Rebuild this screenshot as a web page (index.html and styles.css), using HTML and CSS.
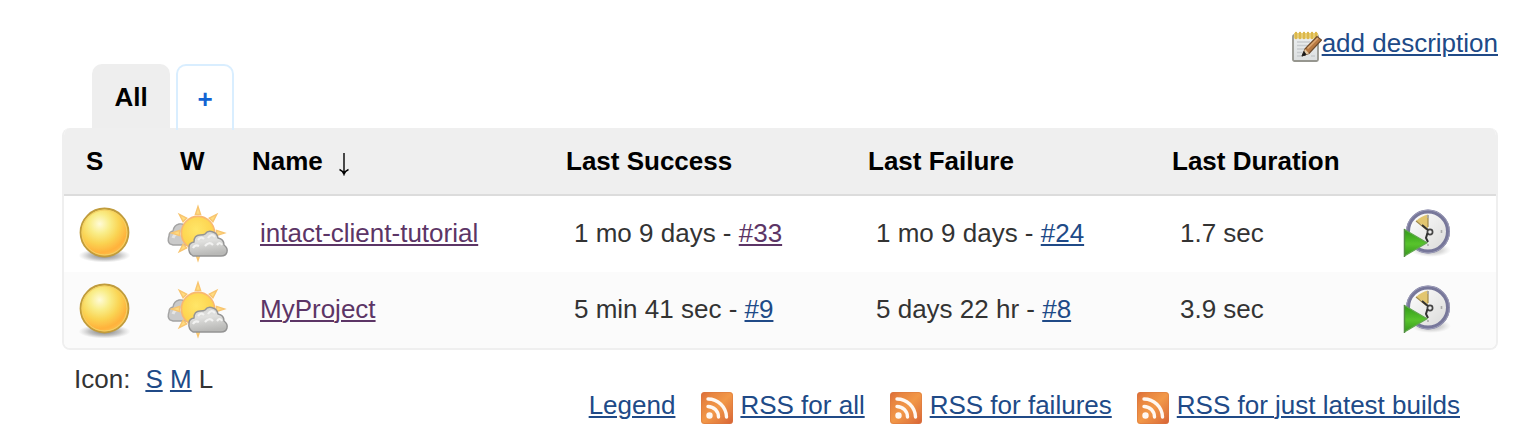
FILE: index.html
```html
<!DOCTYPE html>
<html lang="en">
<head>
<meta charset="utf-8">
<title>Dashboard</title>
<link rel="stylesheet" href="styles.css">
</head>
<body>
<svg class="defs" width="0" height="0" aria-hidden="true">
  <defs>
    <radialGradient id="ball" cx=".4" cy=".32" r=".7"><stop offset="0" stop-color="#fffbd8"/><stop offset=".3" stop-color="#f9ed88"/><stop offset=".58" stop-color="#fad453"/><stop offset=".85" stop-color="#ffb23c"/><stop offset="1" stop-color="#ffbe4c"/></radialGradient>
    <radialGradient id="shade"><stop offset="0" stop-color="#555" stop-opacity=".8"/><stop offset=".6" stop-color="#777" stop-opacity=".42"/><stop offset="1" stop-color="#999" stop-opacity="0"/></radialGradient>
    <radialGradient id="sun" cx=".45" cy=".4" r=".6"><stop offset="0" stop-color="#ffe668"/><stop offset="1" stop-color="#fdd04a"/></radialGradient>
    <linearGradient id="cloud" x1="0" y1="0" x2=".2" y2="1"><stop offset="0" stop-color="#d2d2d0"/><stop offset=".45" stop-color="#e0e0de"/><stop offset="1" stop-color="#b9b9b7"/></linearGradient>
    <linearGradient id="face" x1="0" y1="0" x2="1" y2="1"><stop offset="0" stop-color="#fff"/><stop offset="1" stop-color="#d9d9d8"/></linearGradient>
    <linearGradient id="play" x1="0" y1="0" x2="0" y2="1"><stop offset="0" stop-color="#2f9a16"/><stop offset=".55" stop-color="#58c32d"/><stop offset="1" stop-color="#35991b"/></linearGradient>
    <linearGradient id="feed" x1="0" y1="0" x2="1" y2="1"><stop offset="0" stop-color="#dc6a37"/><stop offset=".2" stop-color="#e78440"/><stop offset=".5" stop-color="#f29848"/><stop offset=".8" stop-color="#e27a3e"/><stop offset="1" stop-color="#d75f35"/></linearGradient>
    <linearGradient id="paper" x1="0" y1="0" x2="0" y2="1"><stop offset="0" stop-color="#eceff0"/><stop offset="1" stop-color="#dcdfe0"/></linearGradient>
    <filter id="soft" filterUnits="userSpaceOnUse" x="-4" y="-4" width="72" height="72"><feGaussianBlur stdDeviation=".75"/></filter>
    <symbol id="i-ball" viewBox="0 0 56 60">
      <ellipse cx="26.5" cy="51.5" rx="26" ry="7" fill="url(#shade)"/>
      <g filter="url(#soft)"><circle cx="26.5" cy="28.5" r="24" fill="url(#ball)" stroke="#c09c3c" stroke-width="1.8"/><circle cx="26.5" cy="28.5" r="22.4" fill="none" stroke="#f3d164" stroke-width="1"/></g>
    </symbol>
    <symbol id="i-weather" viewBox="0 0 64 64">
      <g filter="url(#soft)">
        <path d="M4 42Q1 39 3 34Q3 30 7 29Q8 23 13 22Q19 21 21 27V43H7Z" fill="#cacaca" stroke="#a4a4a4" stroke-width="1.4"/>
        <path d="M7 36Q9 30 15 32" fill="none" stroke="#e5e5e5" stroke-width="3"/>
        <g fill="#ffdc80" stroke="#f8c570" stroke-width="1.4">
          <path id="ray" d="M29.4 12.5 32 4.500 34.6 12.5Z"/>
          <use href="#ray" transform="rotate(45 32 31)"/><use href="#ray" transform="rotate(90 32 31)"/><use href="#ray" transform="rotate(180 32 31) translate(0 -1)"/><use href="#ray" transform="rotate(225 32 31)"/><use href="#ray" transform="rotate(270 32 31)"/><use href="#ray" transform="rotate(315 32 31)"/>
        </g>
        <circle cx="32" cy="31" r="16.6" fill="url(#sun)" stroke="#f9b870" stroke-width="1.7"/>
        <path d="M27 54Q22 51 23 45Q23 41 28 40Q28 33 34 33Q38 33 39 32Q42 28 47 30Q51 31 52 36Q58 37 58 43Q62 46 61 50Q60 54 55 54Z" fill="url(#cloud)" stroke="#949494" stroke-width="1.4"/>
        <path d="M27 46Q29 42 33 44M32 38Q35 34 38 37M42 36Q45 31 49 35M39 44Q43 39 47 43M51 43Q54 39 56 43" fill="none" stroke="#f2f2f1" stroke-width="2.2"/>
      </g>
    </symbol>
    <symbol id="i-clock" viewBox="0 0 54 54">
      <ellipse cx="29" cy="43" rx="20" ry="7" fill="url(#shade)" opacity=".6"/>
      <g filter="url(#soft)">
        <circle cx="26" cy="24.5" r="20" fill="url(#face)" stroke="#77779a" stroke-width="4"/>
        <circle cx="26" cy="24.5" r="21.4" fill="none" stroke="#9d9db9" stroke-width="1"/>
        <path d="M14 14Q19 9 26 7.500V21.500Z" fill="#e2c66f"/>
        <path d="M14 14 24.500 22.500M26 8V20" stroke="#a18a4a" stroke-width="1.2"/>
        <circle cx="28" cy="25" r="2.6" fill="#eee" stroke="#444" stroke-width="1.7"/>
        <path d="M20 18 26 23M25.500 26 24 31 26 35" fill="none" stroke="#333" stroke-width="2"/>
        <path d="M39.500 23V26M26 37V39M26 8V11" stroke="#aaa" stroke-width="1.6"/>
        <path d="M2.500 22.500V49L25 35.800Z" fill="url(#play)" stroke="#62a74f" stroke-width="1.2"/>
        <path d="M2.500 22V50" stroke="#558d45" stroke-width="1.4"/>
      </g>
    </symbol>
    <symbol id="i-feed" viewBox="0 0 32 32">
      <rect width="32" height="32" rx="3.500" fill="url(#feed)"/><rect x=".5" y=".5" width="31" height="31" rx="3" fill="none" stroke="#d9773e" stroke-opacity=".5"/>
      <g filter="url(#soft)" fill="none" stroke="#fff8f2" stroke-width="3.400" stroke-linecap="round"><circle cx="8.500" cy="23.500" r="1.500" fill="#fff"/><path d="M7 14.500A10.500 10.500 0 0 1 17.500 25M7 7A18.500 18.500 0 0 1 25.500 25"/></g>
    </symbol>
  </defs>
</svg>

<div class="description"><a class="link" href="#"><svg class="notepad" viewBox="0 0 30 32"><g filter="url(#soft)"><rect x="1" y="5" width="25" height="26" rx="1.500" fill="url(#paper)" stroke="#96968f" stroke-width="1.800"/><path d="M5 12H18M5 15.500H16M5 19H14M5 22.500H12M5 26H11M19 26H23" stroke="#c7cbce" stroke-width="1.300"/><path d="M2 3H26V8.500H2Z" fill="#ead17b"/><path d="M4 3V8M8 3V8M12 3V8M16 3V8M20 3V8M24 3V8" stroke="#dcb84b" stroke-width="2.400" stroke-linecap="round"/><path d="M13 19 25 6.500 29.500 10 17 23.500 10.500 25.500Z" fill="#b87942" stroke="#6e4b2c" stroke-width="1.200"/><path d="M15.500 18.500 26 8" stroke="#dca771" stroke-width="1.600"/><path d="M13 19 17 23.500 10.500 25.500Z" fill="#e2c8a4"/><path d="M12 21.500 14 24.800 10 26Z" fill="#111" stroke="#222"/></g></svg><span class="text">add description</span></a></div>

<div class="tabs">
  <a class="tab tab-active" href="#">All</a>
  <a class="tab tab-new" href="#">+</a>
</div>

<table class="projects">
  <colgroup><col class="c-status"><col class="c-weather"><col class="c-name"><col class="c-success"><col class="c-failure"><col class="c-duration"><col class="c-build"></colgroup>
  <thead>
    <tr><th class="narrow">S</th><th class="narrow">W</th><th>Name <svg class="arrow" viewBox="0 0 12 24"><path d="M6 1V22M1.500 17.500Q5 19 6 22.300Q7 19 10.500 17.500" fill="none" stroke="#000" stroke-width="1.400"/></svg></th><th>Last Success</th><th>Last Failure</th><th>Last Duration</th><th></th></tr>
  </thead>
  <tbody>
    <tr><td class="status"><svg class="ball"><use href="#i-ball"/></svg></td><td class="weather"><svg class="forecast"><use href="#i-weather"/></svg></td><td><a class="text visited" href="#">intact-client-tutorial</a></td><td>1 mo 9 days - <a class="text visited" href="#">#33</a></td><td>1 mo 9 days - <a class="text" href="#">#24</a></td><td>1.7 sec</td><td class="build"><svg class="clock"><use href="#i-clock"/></svg></td></tr>
    <tr><td class="status"><svg class="ball"><use href="#i-ball"/></svg></td><td class="weather"><svg class="forecast"><use href="#i-weather"/></svg></td><td><a class="text visited" href="#">MyProject</a></td><td>5 min 41 sec - <a class="text" href="#">#9</a></td><td>5 days 22 hr - <a class="text" href="#">#8</a></td><td>3.9 sec</td><td class="build"><svg class="clock"><use href="#i-clock"/></svg></td></tr>
  </tbody>
</table>

<div class="footer">
  <div class="sizes"><span class="label">Icon:</span><a class="text" href="#">S</a> <a class="text" href="#">M</a> L</div>
  <div class="feeds">
    <a class="text" href="#">Legend</a>
    <a class="feed" href="#"><svg class="rss"><use href="#i-feed"/></svg><span class="text">RSS for all</span></a>
    <a class="feed" href="#"><svg class="rss"><use href="#i-feed"/></svg><span class="text">RSS for failures</span></a>
    <a class="feed" href="#"><svg class="rss"><use href="#i-feed"/></svg><span class="text">RSS for just latest builds</span></a>
  </div>
</div>
</body>
</html>
```

FILE: styles.css
```css
* { box-sizing: border-box; }
body { margin: 0; padding: 28px 16px 0 62px; height: 440px; overflow: hidden; background: #fff; color: #333; font: 26px/30px "Liberation Sans", Arial, sans-serif; }
svg { display: block; flex: none; }
.defs { position: absolute; }
a { color: #204a87; text-decoration: none; }
.text { text-decoration: underline; text-decoration-thickness: 2px; text-underline-offset: 2px; }
.visited { color: #5c3566; }

.description { display: flex; justify-content: flex-end; height: 36px; }
.link { display: flex; }
.notepad { width: 30px; height: 32px; margin-top: 2px; }

.tabs { display: flex; gap: 6px; padding-left: 30px; height: 64px; }
.tab { height: 64px; border-radius: 10px 10px 0 0; font-weight: bold; text-align: center; }
.tab-active { width: 78px; padding-top: 18px; background: #eee; color: #000; }
.tab-new { position: relative; z-index: 1; width: 58px; height: 66px; padding-top: 18px; border: 2px solid #d9eeff; border-bottom: 0; color: #1263d2; }

.projects { width: 1436px; table-layout: fixed; border: 2px solid #efefef; border-top: 0; border-radius: 8px; border-spacing: 0; overflow: hidden; }
.c-status { width: 94px; }
.c-weather { width: 78px; }
.c-name { width: 314px; }
.c-success { width: 302px; }
.c-failure { width: 304px; }
.c-duration { width: 232px; }
.c-build { width: 108px; }
th { height: 68px; padding: 0 0 0 16px; border-bottom: 2px solid #dcdcdc; background: #efefef; color: #000; text-align: left; white-space: nowrap; }
th.narrow { padding-left: 22px; }
.arrow { display: inline-block; width: 12px; height: 24px; margin-left: 8px; vertical-align: -6px; }
td { height: 76px; padding: 0 0 2px 24px; white-space: nowrap; }
tbody tr:nth-child(2) { background: #fbfbfb; }
td.status { padding: 0 0 0 14px; }
td.weather { padding: 0 0 0 8px; }
td.build { padding: 0 0 0 14px; }
.ball { width: 56px; height: 60px; }
.forecast { width: 64px; height: 64px; }
.clock { width: 54px; height: 54px; }

.footer { display: flex; justify-content: space-between; padding: 14px 38px 0 12px; }
.label { margin-right: 15px; }
.feeds { display: flex; gap: 25.5px; padding-top: 26px; }
.feed { display: flex; gap: 7.5px; }
.rss { width: 32px; height: 32px; margin-top: 2px; }
```
